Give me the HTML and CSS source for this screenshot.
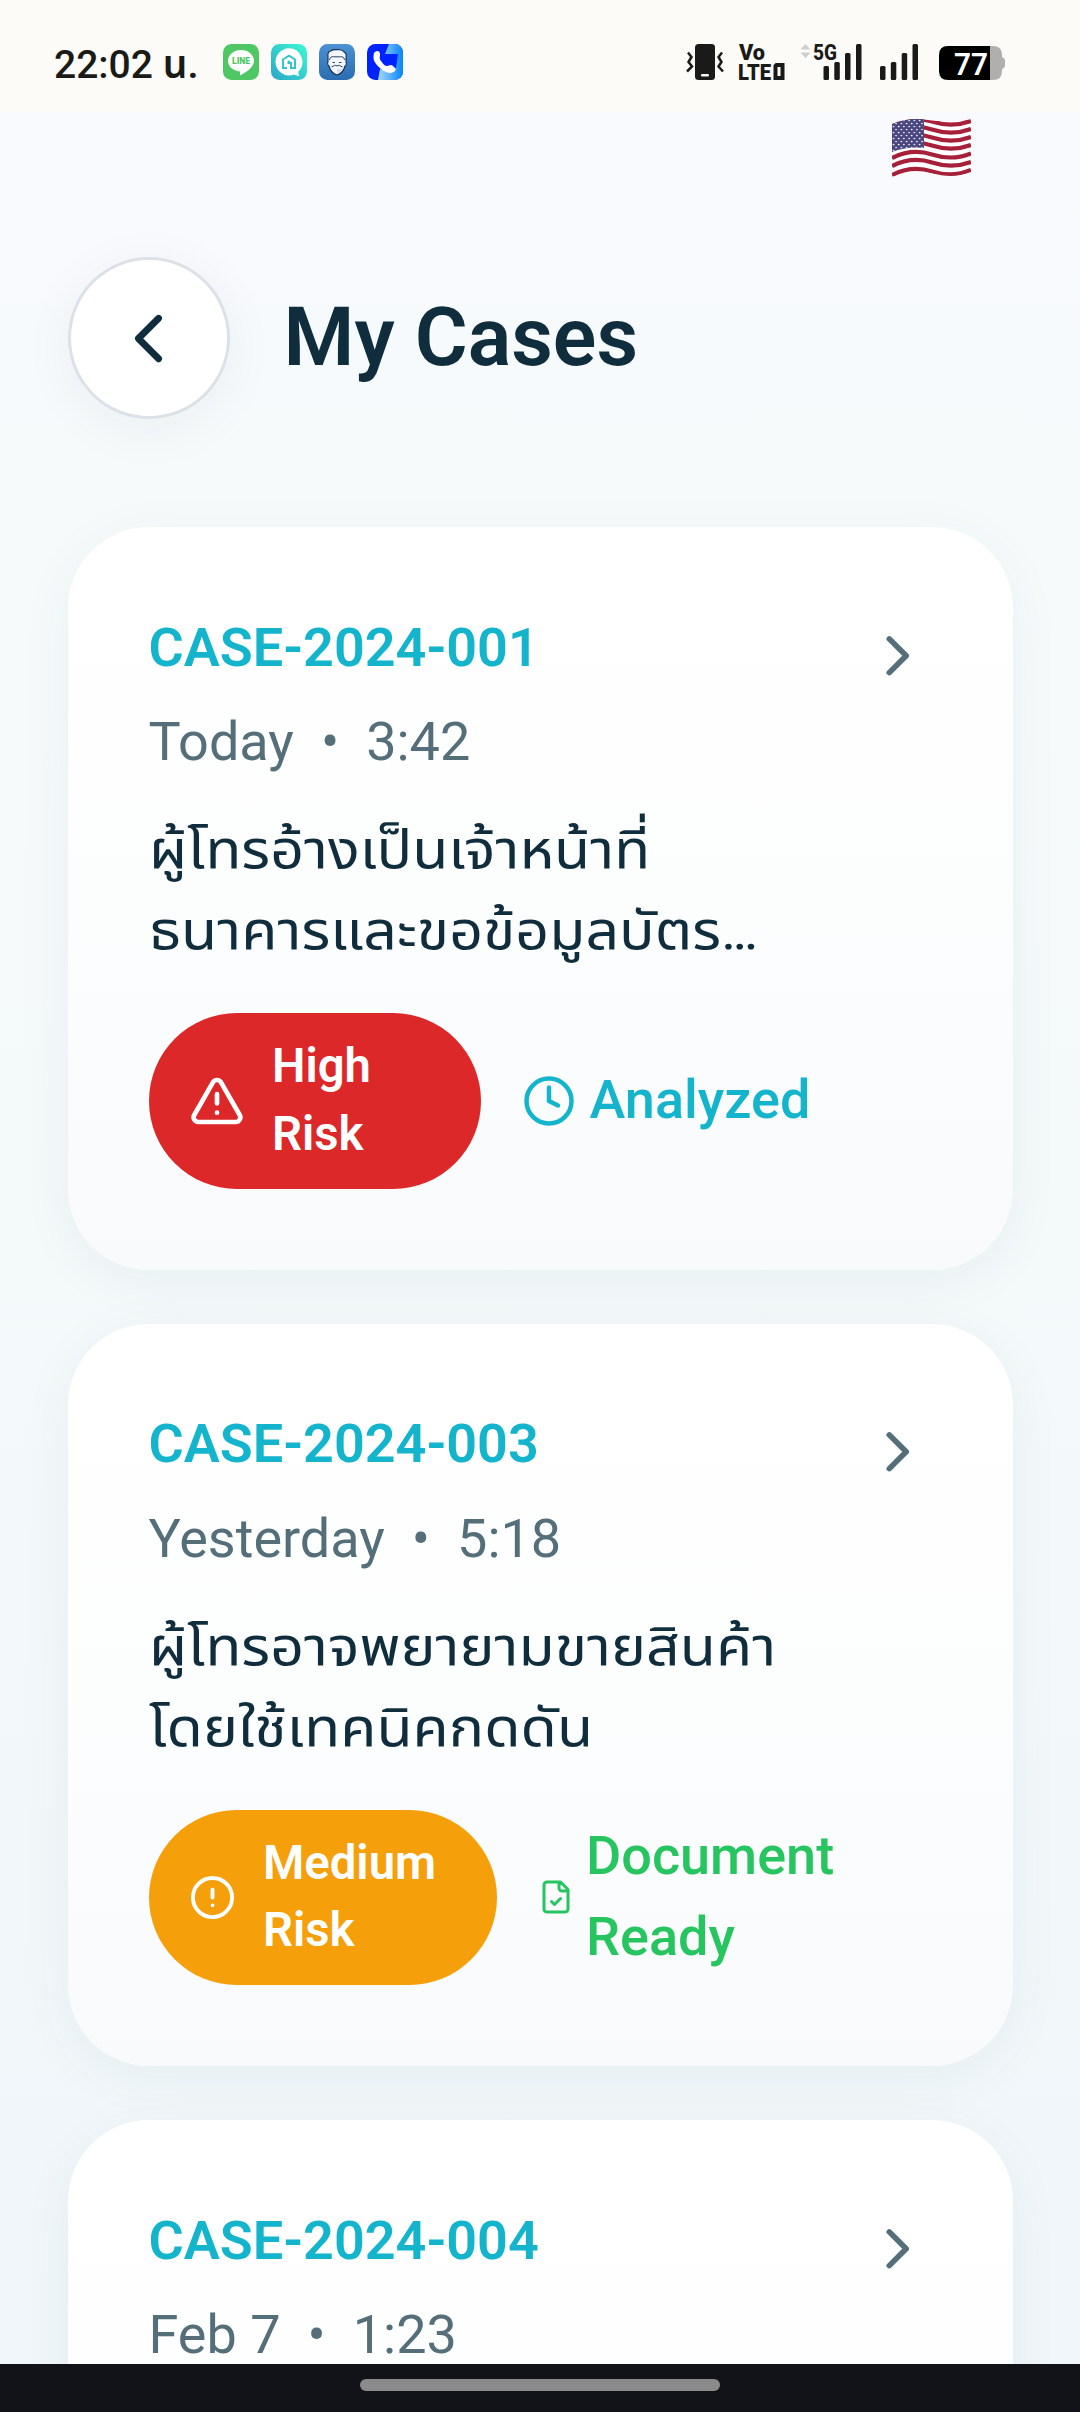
FILE: index.html
```html
<!DOCTYPE html>
<html lang="th">
<head>
<meta charset="utf-8">
<title>My Cases</title>
<link rel="stylesheet" href="styles.css">
</head>
<body>
<div class="screen">
  <header class="status">
    <span class="clock"><span class="clock-time">22:02</span> <span class="clock-unit">น.</span></span>
    <div class="apps">
      <svg class="app" viewBox="0 0 36 36"><rect width="36" height="36" rx="8.5" fill="#4ec764"/><path d="M18 6C10.800 6 5 10.800 5 17c0 5.500 5 9.500 12 10.500v4C23 28.500 31 23 31 17 31 10.800 25.200 6 18 6Z" fill="#fff"/><text x="18" y="20" text-anchor="middle" textLength="18" lengthAdjust="spacingAndGlyphs" font-size="8.500" font-weight="900" fill="#4ec764">LINE</text></svg>
      <svg class="app" viewBox="0 0 36 36"><defs><linearGradient id="mint" x1="0" y1="1" x2="1" y2="0"><stop stop-color="#2ba5c7"/><stop offset="1" stop-color="#3cfad2"/></linearGradient></defs><rect width="36" height="36" rx="8.500" fill="url(#mint)"/><path d="M18 4.300a13.600 13.600 0 1 0 5 26.300l5.200 1.600-1-4.500A13.600 13.600 0 0 0 18 4.300Z" fill="#fff"/><path d="M16 24h-4v-8.500l6-3.900 6 3.900V24h-4v-5h-3.500" fill="none" stroke="#35c4cc" stroke-width="2"/><circle cx="18" cy="18" r="1.400" fill="#35c4cc"/></svg>
      <svg class="app" viewBox="0 0 36 36"><defs><linearGradient id="blue" x2="0" y2="1"><stop stop-color="#4b91d3"/><stop offset="1" stop-color="#2a6db0"/></linearGradient></defs><rect width="36" height="36" rx="8.500" fill="url(#blue)"/><path d="M9 12c-.5-3 1-5 3-5 2-2 5-1 6-1.500 4 0 6 1 7 2.500 2 1 2.500 3 2 5v5c1 1 0 4-1 4-1 4-4 8-8 9-4-1-7-5-8-9-1-.5-2-3-1-4Z" fill="#f4f6ff" stroke="#16304f" stroke-width="1.100"/><path d="M10.500 16c.5-3 2-3.500 4-3.200h7c2-.3 3.500.2 4 3.200" fill="none" stroke="#16304f" stroke-width=".9"/><path d="M13.500 18.500h2.500M20 18.500h2.500M12.500 23c2-1 4-2.500 5.500-1 1.500-1.500 3.500 0 5.500 1" fill="none" stroke="#16304f" stroke-width=".9"/><path d="M18 25h5l-2 3-3 2Z" fill="#d9dcf0"/></svg>
      <svg class="app" viewBox="0 0 36 36"><defs><linearGradient id="sky"><stop stop-color="#a9d8ff"/><stop offset="1" stop-color="#0584ff"/></linearGradient><clipPath id="tile"><rect width="36" height="36" rx="8.500"/></clipPath></defs><g clip-path="url(#tile)"><rect width="36" height="36" fill="#0022ff"/><path d="M22 0h14v36H11l2-11 10 3 6-4 2-14H18Z" fill="url(#sky)"/><path d="M8 8c2-2 5-1 5 2s-1 4 1 7 4 5 6 5 4-2 6 0 4 3 2 5-6 3-11 0S6 18 6.500 13 7 9 8 8Z" fill="#fff"/></g></svg>
    </div>
    <div class="signals">
      <svg class="vibrate" viewBox="0 0 38 36"><rect x="9" width="20" height="36" rx="3.500" fill="#1a1a18"/><rect x="15" y="30" width="8" height="2.500" rx="1" fill="#fcfbf7"/><path d="M2 8.500l3.500 4.500L2.500 18l3.500 4.500-5 5M36 8.500 32.500 13l3 5-3 4.500 4.500 5" fill="none" stroke="#1a1a18" stroke-width="2.500"/></svg>
      <svg class="volte" viewBox="0 0 46 36"><text x="0" y="16" textLength="26" lengthAdjust="spacingAndGlyphs" font-size="21.500" font-weight="900" fill="#1a1a18">Vo</text><text x="-1" y="36" textLength="33" lengthAdjust="spacingAndGlyphs" font-size="22" font-weight="900" fill="#1a1a18">LTE</text><path d="M37.500 21h6v13h-7V22Z" fill="none" stroke="#1a1a18" stroke-width="4"/></svg>
      <svg class="cell-5g" viewBox="0 0 62 38"><path d="M.5 7.500 5.500 2l5 5.500ZM.5 10.500l5 5.500 5-5.500Z" fill="#cfcecb"/><text x="13" y="17.500" textLength="24" lengthAdjust="spacingAndGlyphs" font-size="22" font-weight="800" fill="#1a1a18">5G</text><g fill="#1a1a18"><rect x="23.500" y="24" width="5.500" height="14" rx="1.500"/><rect x="34.300" y="20" width="5.500" height="18" rx="1.500"/><rect x="45" y="11" width="5.500" height="27" rx="1.500"/><rect x="56" y="2" width="5.500" height="36" rx="1.500"/></g></svg>
      <svg class="cell" viewBox="0 0 39 36"><g fill="#1a1a18"><rect y="22" width="5.500" height="14" rx="1.500"/><rect x="10.800" y="18" width="5.500" height="18" rx="1.500"/><rect x="21.700" y="9" width="5.500" height="27" rx="1.500"/><rect x="32.500" width="5.500" height="36" rx="1.500"/></g></svg>
      <svg class="battery" viewBox="0 0 66 34"><path d="M51 0h3q9 0 9 9v2q3 1 3 4v4q0 3-3 4v2q0 9-9 9h-3Z" fill="#b0afad"/><path d="M9 0h42v34H9q-9 0-9-9V9Q0 0 9 0Z" fill="#000"/><text x="15" y="29" textLength="34" lengthAdjust="spacingAndGlyphs" font-size="30.500" font-weight="600" fill="#fff">77</text></svg>
    </div>
  </header>

  <main class="page">
    <div class="lang">
      <svg class="flag" viewBox="0 0 79 58">
        <defs>
          <clipPath id="wave"><path d="M0 5Q17-2 36 1T79 0V53Q62 60 43 55T0 58Z"/></clipPath>
          <pattern id="stars" width="5.200" height="6" patternUnits="userSpaceOnUse"><circle cx="1.500" cy="1.500" r=".85" fill="#fff"/><circle cx="4.100" cy="4.500" r=".85" fill="#fff"/></pattern>
        </defs>
        <g clip-path="url(#wave)">
          <rect width="79" height="58" fill="#fff"/>
          <g fill="none" stroke="#a6203a" stroke-width="4.200">
            <path d="M0 5.500Q20-4 40 2.500T79 2"/><path d="M0 14Q20 4 40 10.500T79 10"/><path d="M0 22Q20 12 40 18.500T79 18"/><path d="M0 30Q20 20 40 26.500T79 26"/><path d="M0 39Q20 29 40 35.500T79 34.500"/><path d="M0 47Q20 37 40 43.500T79 43"/><path d="M0 56Q20 46 40 52.500T79 51"/>
          </g>
          <path d="M0 5Q15-2 32 0V29Q15 27 0 33Z" fill="#49457f"/><path d="M0 5Q15-2 32 0V29Q15 27 0 33Z" fill="url(#stars)"/>
        </g>
      </svg>
    </div>
    <div class="heading">
      <button class="back" aria-label="Back"><svg class="icon" viewBox="0 0 24 24"><path d="m15 18-6-6 6-6"/></svg></button>
      <h1 class="title">My Cases</h1>
    </div>

    <section class="cases">
      <article class="card">
        <div class="card-body">
          <h2 class="case-id">CASE-2024-001</h2>
          <div class="meta"><span>Today</span><span>•</span><span>3:42</span></div>
          <p class="summary">ผู้โทรอ้างเป็นเจ้าหน้าที่<br>ธนาคารและขอข้อมูลบัตร<span class="dots">...</span></p>
          <div class="tags">
            <span class="risk risk-high"><svg class="icon" viewBox="0 0 24 24"><path d="m21.730 18-8-14a2 2 0 0 0-3.480 0l-8 14A2 2 0 0 0 4 21h16a2 2 0 0 0 1.730-3M12 9v4M12 17h.01"/></svg><span>High<br>Risk</span></span>
            <span class="state analyzed"><svg class="icon" viewBox="0 0 24 24"><circle cx="12" cy="12" r="10"/><path d="M12 6v6l4 2"/></svg><span class="label">Analyzed</span></span>
          </div>
        </div>
        <svg class="icon open" viewBox="0 0 24 24"><path d="m9 18 6-6-6-6"/></svg>
      </article>

      <article class="card">
        <div class="card-body">
          <h2 class="case-id">CASE-2024-003</h2>
          <div class="meta"><span>Yesterday</span><span>•</span><span>5:18</span></div>
          <p class="summary">ผู้โทรอาจพยายามขายสินค้า<br>โดยใช้เทคนิคกดดัน</p>
          <div class="tags">
            <span class="risk risk-medium"><svg class="icon" viewBox="0 0 24 24"><circle cx="12" cy="12" r="10"/><path d="M12 8v4M12 16h.01"/></svg><span>Medium<br>Risk</span></span>
            <span class="state ready"><svg class="icon" viewBox="0 0 24 24"><path d="M15 2H6a2 2 0 0 0-2 2v16a2 2 0 0 0 2 2h12a2 2 0 0 0 2-2V7ZM14 2v4a2 2 0 0 0 2 2h4M9 15l2 2 4-4"/></svg><span class="label">Document<br>Ready</span></span>
          </div>
        </div>
        <svg class="icon open" viewBox="0 0 24 24"><path d="m9 18 6-6-6-6"/></svg>
      </article>

      <article class="card">
        <div class="card-body">
          <h2 class="case-id">CASE-2024-004</h2>
          <div class="meta"><span>Feb 7</span><span>•</span><span>1:23</span></div>
        </div>
        <svg class="icon open" viewBox="0 0 24 24"><path d="m9 18 6-6-6-6"/></svg>
      </article>
    </section>
  </main>

  <footer class="nav"><span class="handle"></span></footer>
</div>
</body>
</html>
```
FILE: styles.css
```css
* { box-sizing: border-box; margin: 0; }
body {
  font-family: Roboto, "Noto Sans Thai", "Noto Sans", sans-serif;
  color: #0f2d3d;
}
.screen {
  width: 1080px;
  height: 2412px;
  display: flex;
  flex-direction: column;
  overflow: hidden;
}

.status {
  flex: none;
  height: 112px;
  padding: 44px 75px 0 54px;
  display: flex;
  align-items: flex-start;
  background: #fcfbf7;
  color: #1a1a18;
}
.clock {
  width: 169px;
  line-height: 43px;
  font-size: 39px;
  font-weight: 500;
  white-space: nowrap;
}
.clock-unit { font-weight: 600; }
.apps { display: flex; gap: 12px; }
.app { width: 36px; height: 36px; }
.signals { margin-left: auto; display: flex; align-items: flex-end; height: 36px; }
.signals svg { flex: none; overflow: visible; }
.vibrate { width: 38px; height: 36px; margin-right: 15px; }
.volte { width: 46px; height: 36px; margin-right: 15px; }
.cell-5g { width: 62px; height: 38px; margin-right: 18px; }
.cell { width: 39px; height: 36px; margin-right: 20px; }
.battery { width: 66px; height: 34px; }

.page {
  flex: 1;
  min-height: 0;
  overflow: hidden;
  padding: 0 67.5px;
  background: linear-gradient(180deg, #f9fafd 0%, #f6fafb 15%, #f4f9fa 50%, #f0f6f9 100%);
}
.lang { height: 145px; padding: 7px 41.5px 0 0; display: flex; justify-content: flex-end; }
.flag { width: 79px; height: 58px; }
.heading { display: flex; align-items: center; gap: 54px; height: 162px; }
.back {
  width: 162px;
  height: 162px;
  padding: 0;
  display: grid;
  place-items: center;
  border: 3px solid #dbe1e6;
  border-radius: 50%;
  background: #fff;
  color: #0f2d3d;
  box-shadow: 0 11px 54px rgba(15, 45, 61, .05);
}
.title { font-size: 81px; line-height: 100px; font-weight: 600; }
.icon {
  flex: none;
  fill: none;
  stroke: currentColor;
  stroke-width: 2;
  stroke-linecap: round;
  stroke-linejoin: round;
}
.back .icon { width: 81px; height: 81px; }

.cases { margin-top: 108px; display: flex; flex-direction: column; gap: 54px; }
.card {
  flex: none;
  height: 742.5px;
  padding: 81px;
  display: flex;
  align-items: flex-start;
  border-radius: 81px;
  background: linear-gradient(180deg, #fff, #fcfdfd 50%, #f9fafc);
  box-shadow: 0 11px 54px rgba(20, 80, 90, .05);
}
.card-body { flex: 1; margin-top: -1.5px; }
.open { width: 67.5px; height: 67.5px; margin-top: 13.5px; color: #546e7a; }
.case-id { font-size: 54px; line-height: 81px; font-weight: 600; color: #14b5cc; }
.meta {
  margin-top: 13.5px;
  display: flex;
  gap: 27px;
  font-size: 54px;
  line-height: 81px;
  color: #546e7a;
}
.summary {
  margin-top: 27px;
  font-size: 54px;
  line-height: 81px;
  white-space: nowrap;
  transform: scaleX(1.093);
  transform-origin: left;
}
.dots { letter-spacing: -4px; }
.tags { margin-top: 42px; display: flex; align-items: center; gap: 41.5px; }
.risk {
  flex: none;
  height: 175.5px;
  padding-left: 40.5px;
  display: flex;
  align-items: center;
  gap: 27px;
  border-radius: 88px;
  font-size: 47.25px;
  line-height: 67.5px;
  font-weight: 600;
  color: #fff;
}
.risk-high { width: 332px; background: #dc2828; }
.risk-high .icon { width: 56px; height: 56px; }
.risk-medium { width: 348px; background: #f59f0a; }
.risk-medium .icon { width: 47px; height: 47px; }
.state {
  display: flex;
  align-items: center;
  gap: 13.5px;
  font-size: 54px;
  line-height: 81px;
  font-weight: 500;
}
.label { margin-bottom: 2px; }
.analyzed { color: #14b5cc; }
.analyzed .icon { width: 54px; height: 54px; }
.ready { gap: 12px; color: #27c55f; }
.ready .icon { width: 36px; height: 36px; }

.nav {
  flex: none;
  height: 48px;
  padding-top: 15px;
  display: flex;
  justify-content: center;
  background: #121318;
}
.handle { width: 360px; height: 12px; border-radius: 6px; background: #8a8a8b; }
```
